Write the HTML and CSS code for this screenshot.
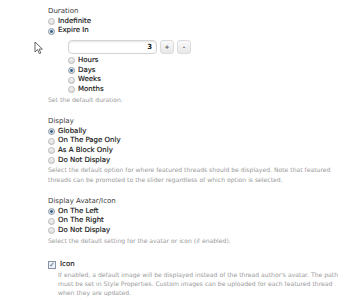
FILE: index.html
```html
<!doctype html>
<html>
<head lang='en'>
  <meta charset='utf-8'>
  <meta name='viewport' content='width=device-width'>
  <title>Featured Threads Options</title>
  <link rel="stylesheet" href="styles.css">
</head>
<body>
<div class="page">
  <div class="option">
    <div class="option__title">Duration</div>
    <label class="choice"><span class="radio"></span>Indefinite</label>
    <label class="choice"><span class="radio radio--on"></span>Expire In</label>
    <div class="sub">
      <div class="spinner">
        <div class="spinner__box">3</div>
        <span class="spinner__btn">+</span>
        <span class="spinner__btn">-</span>
      </div>
      <label class="choice"><span class="radio"></span>Hours</label>
      <label class="choice"><span class="radio radio--on"></span>Days</label>
      <label class="choice"><span class="radio"></span>Weeks</label>
      <label class="choice"><span class="radio"></span>Months</label>
    </div>
    <p class="hint">Set the default duration.</p>
  </div>

  <div class="option">
    <div class="option__title">Display</div>
    <label class="choice"><span class="radio radio--on"></span>Globally</label>
    <label class="choice"><span class="radio"></span>On The Page Only</label>
    <label class="choice"><span class="radio"></span>As A Block Only</label>
    <label class="choice"><span class="radio"></span>Do Not Display</label>
    <p class="hint">Select the default option for where featured threads should be displayed. Note that featured threads can be promoted to the slider regardless of which option is selected.</p>
  </div>

  <div class="option">
    <div class="option__title">Display Avatar/Icon</div>
    <label class="choice"><span class="radio radio--on"></span>On The Left</label>
    <label class="choice"><span class="radio"></span>On The Right</label>
    <label class="choice"><span class="radio"></span>Do Not Display</label>
    <p class="hint">Select the default setting for the avatar or icon (if enabled).</p>
  </div>

  <div class="option option--check">
    <label class="choice"><span class="check">&#10003;</span>Icon</label>
    <p class="hint hint--indent">If enabled, a default image will be displayed instead of the thread author's avatar. The path must be set in Style Properties. Custom images can be uploaded for each featured thread when they are updated.</p>
  </div>
</div>

<svg class="cursor" width="10" height="14" viewBox="0 0 10 14">
  <path d="M1 1 L1 11 L3.5 8.6 L5.3 12.6 L6.8 12 L5.1 8.1 L8.4 8.1 Z" fill="#fff" stroke="#555" stroke-width="0.9" stroke-linejoin="round"/>
</svg>
</body>
</html>
```

FILE: styles.css
```css
html, body, p, div {
  margin: 0;
  padding: 0;
}

html {
  box-sizing: border-box;
}

*, *:before, *:after {
  box-sizing: inherit;
}

body {
  font-family: 'DejaVu Sans', Verdana, sans-serif;
  background: #fff;
  color: #333;
  position: relative;
}

.page {
  padding: 7px 6px 0 48px;
}

.option {
  margin-bottom: 13px;
}

.option--check {
  margin-top: 15px;
}

.option__title {
  font-size: 7px;
  line-height: 9.7px;
  color: #3a3a3a;
}

.choice {
  display: flex;
  align-items: center;
  height: 9.7px;
  font-size: 7px;
  line-height: 9.7px;
  color: #111;
  -webkit-text-stroke: 0.15px #111;
}

.radio {
  width: 7px;
  height: 7px;
  border-radius: 50%;
  border: 1px solid #b8b8b8;
  background: linear-gradient(#f4f4f4, #dcdcdc);
  margin-right: 3px;
  flex: none;
}

.radio--on {
  background: radial-gradient(circle, #2f5f86 0, #3a6e99 35%, #e4e4e4 45%, #d0d0d0 100%);
  border-color: #8a9aa8;
}

.check {
  width: 8px;
  height: 8px;
  border: 1px solid #8a94a8;
  background: #eef1f6;
  color: #4a5f8a;
  font-size: 7px;
  line-height: 6px;
  text-align: center;
  margin-right: 4px;
  flex: none;
  -webkit-text-stroke: 0;
}

.sub {
  padding: 4px 0 0 20px;
}

.spinner {
  display: flex;
  gap: 3px;
  margin-bottom: 2px;
}

.spinner__box {
  width: 89px;
  height: 14px;
  border: 1px solid #d4d4d4;
  border-radius: 4px;
  box-shadow: inset 0 1px 2px #e6e6e6;
  font-size: 7px;
  font-weight: bold;
  line-height: 12px;
  text-align: right;
  padding-right: 4px;
  color: #222;
}

.spinner__btn {
  width: 14px;
  height: 14px;
  border: 1px solid #dcdcdc;
  border-radius: 3px;
  background: linear-gradient(#fafafa, #e8e8e8);
  font-size: 6px;
  line-height: 12px;
  text-align: center;
  color: #555;
  font-weight: bold;
}

.hint {
  font-size: 6.1px;
  line-height: 9.2px;
  color: #9a9a9a;
}

.hint--indent {
  padding-left: 10px;
}

.cursor {
  position: absolute;
  left: 34px;
  top: 41px;
}
```
